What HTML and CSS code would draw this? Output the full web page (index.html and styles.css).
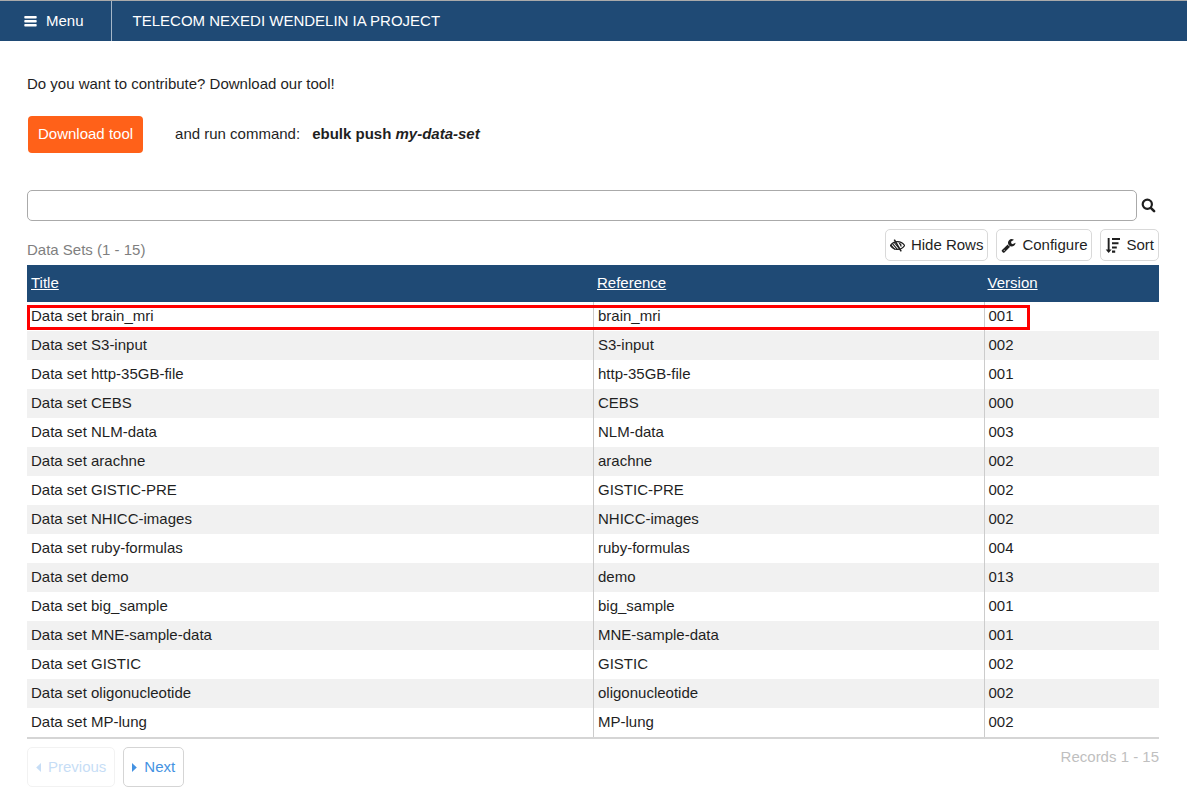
FILE: index.html
```
<!DOCTYPE html>
<html lang="en">
<head>
<meta charset="utf-8">
<title>Data Sets</title>
<link rel="stylesheet" href="styles.css">
</head>
<body>
<header class="topbar">
  <button class="menu" type="button">
    <svg class="icon" viewBox="0 0 15 15" aria-hidden="true"><path d="M2 2h11a.7.7 0 0 1 .7.7v1a.7.7 0 0 1-.7.7H2a.7.7 0 0 1-.7-.7v-1A.7.7 0 0 1 2 2zM2 6h11a.7.7 0 0 1 .7.7v1a.7.7 0 0 1-.7.7H2a.7.7 0 0 1-.7-.7v-1A.7.7 0 0 1 2 6zM2 10h11a.7.7 0 0 1 .7.7v1a.7.7 0 0 1-.7.7H2a.7.7 0 0 1-.7-.7v-1A.7.7 0 0 1 2 10z"/></svg>
    Menu
  </button>
  <h1 class="title">TELECOM NEXEDI WENDELIN IA PROJECT</h1>
</header>
<main class="content">
  <p class="intro">Do you want to contribute? Download our tool!</p>
  <div class="download">
    <a class="download-button" href="#">Download tool</a>
    <span>and run command:</span>
    <strong>ebulk push <em>my-data-set</em></strong>
  </div>
  <form class="search">
    <input class="search-input" type="text" aria-label="Search">
    <button class="search-button" type="button" aria-label="Search">
      <svg class="icon" viewBox="0 0 15 15" aria-hidden="true"><circle cx="6.300" cy="6.300" r="4.600" fill="none" stroke="currentColor" stroke-width="2.200"/><path d="M9.800 9.800l3.300 3.300" fill="none" stroke="currentColor" stroke-width="2.600" stroke-linecap="round"/></svg>
    </button>
  </form>
  <div class="list-head">
    <h2 class="list-title">Data Sets (1 - 15)</h2>
    <div class="tools">
      <button class="tool" type="button">
        <svg class="icon" viewBox="0 0 15 15" aria-hidden="true">
          <path d="M.4 7.500C3.800 2.300 11.200 2.300 14.600 7.500 11.200 12.700 3.800 12.700.4 7.500z" fill="none" stroke="currentColor" stroke-width="1.200"/>
          <path d="M8.500 4.500a3.200 3.200 0 0 1 2.600 4.800z"/>
          <path d="M.9 6.900l3.900 4.600M2.500 5.600l5 6M4.200 4.500l5.800 7" fill="none" stroke="currentColor" stroke-width="1.100"/>
          <path d="M4.300 1.700l6.900 11.700" fill="none" stroke="currentColor" stroke-width="1.500"/>
        </svg>
        Hide Rows
      </button>
      <button class="tool" type="button">
        <svg class="icon" viewBox="0 0 1792 1792" aria-hidden="true"><path d="M448 1472q0-26-19-45t-45-19-45 19-19 45 19 45 45 19 45-19 19-45zm644-420l-682 682q-37 37-90 37-52 0-91-37l-106-108q-38-36-38-90 0-53 38-91l681-681q39 98 114.500 173.500t173.500 114.500zm634-435q0 39-23 106-47 134-164.500 217.500t-258.500 83.500q-185 0-316.500-131.500t-131.500-316.500 131.500-316.500 316.500-131.500q58 0 121.500 16.500t107.500 46.500q16 11 16 28t-16 28l-293 169v224l193 107q5-3 79-48.500t135.500-81 70.500-35.500q15 0 23.500 10t8.500 25z"/></svg>
        Configure
      </button>
      <button class="tool" type="button">
        <svg class="icon" viewBox="0 0 15 15" aria-hidden="true"><path d="M2.700 0h1.900v11.600h2L3.650 15 .7 11.600h2zM7 0h8v2.100H7zM7 4.200h6.500v2.100H7zM7 8.400h4.800v2.100H7zM7 12.600h3.200v2.100H7z"/></svg>
        Sort
      </button>
    </div>
  </div>
  <table class="records">
    <thead>
      <tr><th class="col-title" scope="col"><a href="#">Title</a></th><th class="col-reference" scope="col"><a href="#">Reference</a></th><th scope="col"><a href="#">Version</a></th></tr>
    </thead>
    <tbody>
      <tr class="marked"><td>Data set brain_mri</td><td>brain_mri</td><td>001</td></tr>
      <tr><td>Data set S3-input</td><td>S3-input</td><td>002</td></tr>
      <tr><td>Data set http-35GB-file</td><td>http-35GB-file</td><td>001</td></tr>
      <tr><td>Data set CEBS</td><td>CEBS</td><td>000</td></tr>
      <tr><td>Data set NLM-data</td><td>NLM-data</td><td>003</td></tr>
      <tr><td>Data set arachne</td><td>arachne</td><td>002</td></tr>
      <tr><td>Data set GISTIC-PRE</td><td>GISTIC-PRE</td><td>002</td></tr>
      <tr><td>Data set NHICC-images</td><td>NHICC-images</td><td>002</td></tr>
      <tr><td>Data set ruby-formulas</td><td>ruby-formulas</td><td>004</td></tr>
      <tr><td>Data set demo</td><td>demo</td><td>013</td></tr>
      <tr><td>Data set big_sample</td><td>big_sample</td><td>001</td></tr>
      <tr><td>Data set MNE-sample-data</td><td>MNE-sample-data</td><td>001</td></tr>
      <tr><td>Data set GISTIC</td><td>GISTIC</td><td>002</td></tr>
      <tr><td>Data set oligonucleotide</td><td>oligonucleotide</td><td>002</td></tr>
      <tr><td>Data set MP-lung</td><td>MP-lung</td><td>002</td></tr>
    </tbody>
  </table>
  <nav class="pager" aria-label="Pages">
    <button class="page-button" type="button" disabled>
      <svg class="caret" viewBox="0 0 5 9" aria-hidden="true"><path d="M5 0v9L.2 4.500z"/></svg>
      Previous
    </button>
    <button class="page-button" type="button">
      <svg class="caret" viewBox="0 0 5 9" aria-hidden="true"><path d="M0 0v9l4.800-4.500z"/></svg>
      Next
    </button>
    <span class="count">Records 1 - 15</span>
  </nav>
</main>
</body>
</html>
```

FILE: styles.css
```
*,
*::before,
*::after {
  box-sizing: border-box;
}

body {
  margin: 0;
  background: #fff;
  color: #1f1f1f;
  font: 15px/20px "Liberation Sans", Arial, sans-serif;
}

button,
input {
  margin: 0;
  color: inherit;
  font: inherit;
}

button {
  cursor: pointer;
}

.icon {
  width: 15px;
  height: 15px;
  flex: none;
  fill: currentColor;
}

.topbar {
  display: flex;
  align-items: stretch;
  border-top: 1px solid #aaa;
  background: #1f4a75;
  color: #fff;
}

.menu {
  display: flex;
  align-items: center;
  gap: 8px;
  padding: 0 27px 0 23px;
  border: 0;
  border-right: 1px solid #a5b7c8;
  background: none;
}

.title {
  margin: 0;
  padding: 10px 21px;
  font-size: 15px;
  font-weight: normal;
}

.content {
  padding: 33px 28px 8px 27px;
}

.intro {
  margin: 0 0 22px;
}

.download {
  display: flex;
  align-items: baseline;
  gap: 12px;
  margin-bottom: 37px;
}

.download-button {
  margin: 0 20px 0 1px;
  padding: 8px 10px 9px;
  border-radius: 4px;
  background: #ff6119;
  color: #fff;
  text-decoration: none;
}

.search {
  display: flex;
  align-items: center;
  margin-bottom: 8px;
}

.search-input {
  flex: 1;
  min-width: 0;
  height: 31px;
  padding: 0 8px;
  border: 1px solid #aaa;
  border-radius: 5px;
  background: #fff;
}

.search-button {
  display: flex;
  padding: 4px 3px 4px 4px;
  border: 0;
  background: none;
}

.list-head {
  display: flex;
  align-items: flex-end;
  justify-content: space-between;
  margin-bottom: 4px;
}

.list-title {
  margin: 0;
  padding-bottom: 1px;
  color: #7f7f7f;
  font-size: 15px;
  font-weight: normal;
}

.tools {
  display: flex;
  gap: 8px;
}

.tool {
  display: flex;
  align-items: center;
  gap: 6px;
  height: 32px;
  padding: 0 4px;
  border: 1px solid #d9d9d9;
  border-radius: 5px;
  background: #fff;
}

.records {
  width: 100%;
  table-layout: fixed;
  border-spacing: 0;
  border-bottom: 2px solid #d5d5d5;
}

.col-title {
  width: 50%;
}

.col-reference {
  width: 34.5%;
}

.records th {
  padding: 8px 4px 9px;
  background: #1f4a75;
  color: #fff;
  font-weight: normal;
  text-align: left;
}

.records th a {
  color: inherit;
}

.records td {
  padding: 4px 4px 5px;
}

.records td + td {
  border-left: 1px solid #ccc;
}

.records tbody tr:nth-child(even) {
  background: #f1f1f1;
}

.marked {
  position: relative;
}

/* Outline drawn over the row, across the filled part of its cells */
.marked td:first-child::after {
  content: "";
  position: absolute;
  top: 3px;
  left: 0;
  width: 88.6%;
  height: 25px;
  border: 3px solid #f00;
  pointer-events: none;
}

.pager {
  display: flex;
  align-items: flex-start;
  gap: 8px;
  margin-top: 8px;
}

.page-button {
  display: flex;
  align-items: center;
  gap: 7px;
  height: 40px;
  padding: 0 8px;
  border: 1px solid #d5d5d5;
  border-radius: 5px;
  background: #fff;
  color: #4492e2;
}

.page-button:disabled {
  opacity: 0.3;
  cursor: default;
}

.caret {
  width: 5px;
  height: 9px;
  fill: currentColor;
}

.count {
  margin-left: auto;
  color: #bfbfbf;
}
```
